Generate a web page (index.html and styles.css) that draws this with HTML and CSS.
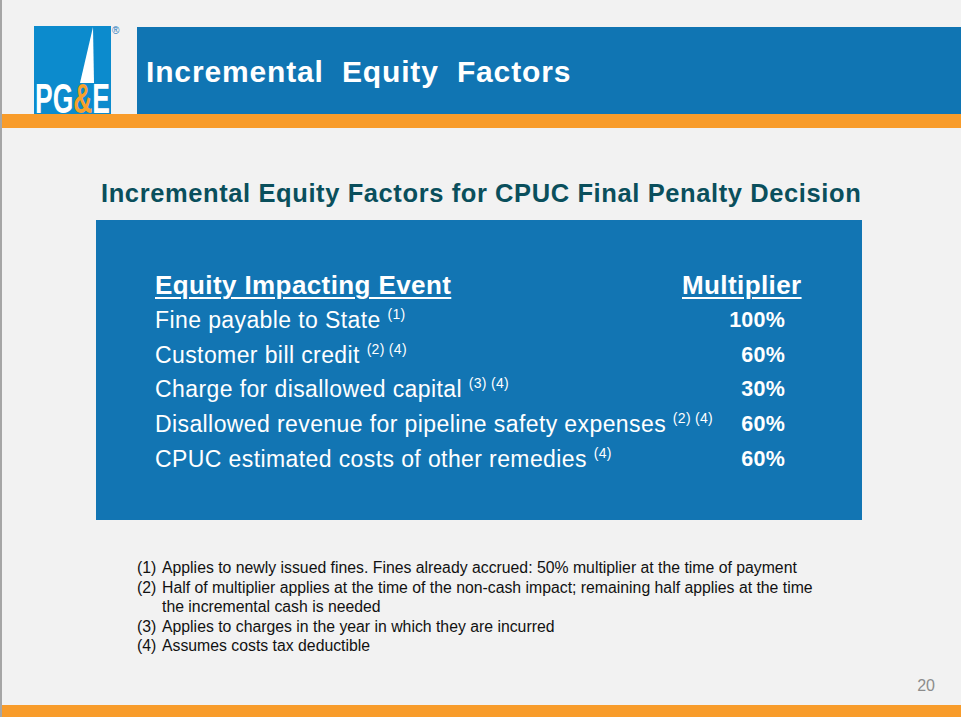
FILE: index.html
```html
<!DOCTYPE html>
<html>
<head>
<meta charset="utf-8">
<link rel="stylesheet" href="styles.css">
</head>
<body>
<div class="slide">
  <header class="head">
    <div class="logo">
      <svg class="logo-svg" width="87" height="88" viewBox="0 0 87 88">
        <rect x="0" y="0" width="77" height="88" fill="#0c8bcd"/>
        <polygon points="59,1 60,57 46,57" fill="#ffffff"/>
        <text transform="translate(1,87) scale(0.615,1)" x="0" y="0" font-family="Liberation Sans, Arial, sans-serif" font-weight="bold" font-size="43" fill="#ffffff">PG<tspan fill="#f7a12b">&amp;</tspan>E</text>
        <text x="78" y="8" font-family="Liberation Sans, Arial, sans-serif" font-size="10" fill="#1a7bbd">®</text>
      </svg>
    </div>
    <div class="titlebar"><h1 class="title">Incremental Equity Factors</h1></div>
  </header>
  <div class="band"></div>

  <main class="content">
    <h2 class="subtitle">Incremental Equity Factors for CPUC Final Penalty Decision</h2>
    <section class="panel">
      <div class="table">
        <div class="th">Equity Impacting Event</div>
        <div class="th th-mult">Multiplier</div>

        <div class="td">Fine payable to State <sup>(1)</sup></div>
        <div class="td pct">100%</div>

        <div class="td">Customer bill credit <sup>(2) (4)</sup></div>
        <div class="td pct">60%</div>

        <div class="td">Charge for disallowed capital <sup>(3) (4)</sup></div>
        <div class="td pct">30%</div>

        <div class="td">Disallowed revenue for pipeline safety expenses <sup>(2) (4)</sup></div>
        <div class="td pct">60%</div>

        <div class="td">CPUC estimated costs of other remedies <sup>(4)</sup></div>
        <div class="td pct">60%</div>
      </div>
    </section>

    <ol class="notes">
      <li><span class="num">(1)</span><span>Applies to newly issued fines. Fines already accrued: 50% multiplier at the time of payment</span></li>
      <li><span class="num">(2)</span><span>Half of multiplier applies at the time of the non-cash impact; remaining half applies at the time the incremental cash is needed</span></li>
      <li><span class="num">(3)</span><span>Applies to charges in the year in which they are incurred</span></li>
      <li><span class="num">(4)</span><span>Assumes costs tax deductible</span></li>
    </ol>
  </main>

  <footer class="foot">
    <div class="pageno">20</div>
    <div class="band band-bottom"></div>
  </footer>
</div>
</body>
</html>
```

FILE: styles.css
```css
html, body {
  margin: 0;
  padding: 0;
}
body {
  background: #f2f2f2;
  font-family: "Liberation Sans", Arial, sans-serif;
}
.slide {
  width: 959px;
  height: 717px;
  border-left: 2px solid #a6a6a6;
  display: flex;
  flex-direction: column;
  overflow: hidden;
}
.head {
  display: flex;
  align-items: flex-end;
  padding-top: 26px;
  height: 88px;
}
.logo {
  width: 87px;
  height: 88px;
  margin-left: 32px;
  margin-right: 16px;
  flex: none;
}
.logo-svg {
  display: block;
  overflow: visible;
}
.titlebar {
  flex: 1;
  height: 87px;
  background: #1075b3;
  box-sizing: border-box;
  padding-left: 9px;
  padding-top: 3px;
}
.title {
  margin: 0;
  color: #ffffff;
  font-size: 30px;
  font-weight: bold;
  letter-spacing: 0.85px;
  word-spacing: 9px;
  line-height: 84px;
}
.band {
  height: 14px;
  background: #f89c2b;
  flex: none;
  position: relative;
}
.content {
  flex: 1;
  display: flex;
  flex-direction: column;
}
.subtitle {
  margin: 50px 0 0 99px;
  font-size: 25.5px;
  line-height: 30px;
  letter-spacing: 0.6px;
  font-weight: bold;
  color: #0a4f5c;
  white-space: nowrap;
}
.panel {
  margin: 12px 0 0 94px;
  width: 766px;
  height: 300px;
  background: #1275b3;
  box-sizing: border-box;
  padding: 47px 0 0 59px;
  color: #ffffff;
}
.table {
  display: grid;
  grid-template-columns: 527px 122px;
}
.th {
  font-size: 26px;
  line-height: 36px;
  font-weight: bold;
  text-decoration: underline;
  text-decoration-thickness: 2px;
  text-underline-offset: 3px;
  letter-spacing: 0.4px;
  white-space: nowrap;
}
.td {
  font-size: 23px;
  line-height: 34.7px;
  letter-spacing: 0.4px;
  white-space: nowrap;
}
.td sup {
  font-size: 14px;
  line-height: 0;
  vertical-align: 0;
  position: relative;
  top: -9px;
  letter-spacing: 0.3px;
}
.pct {
  font-size: 21.5px;
  font-weight: bold;
  text-align: right;
  padding-right: 19px;
  letter-spacing: 0.2px;
}
.notes {
  list-style: none;
  margin: 38px 0 0 135px;
  padding: 0;
  width: 690px;
  font-size: 15.8px;
  line-height: 19.5px;
  color: #111111;
}
.notes li {
  display: flex;
}
.notes .num {
  width: 25px;
  flex: none;
}
.foot {
  display: flex;
  flex-direction: column;
  align-items: stretch;
}
.pageno {
  align-self: flex-end;
  margin-right: 26px;
  font-size: 16px;
  line-height: 20px;
  color: #8c8c8c;
  margin-bottom: 9px;
}
.band-bottom {
  height: 12px;
}
```
